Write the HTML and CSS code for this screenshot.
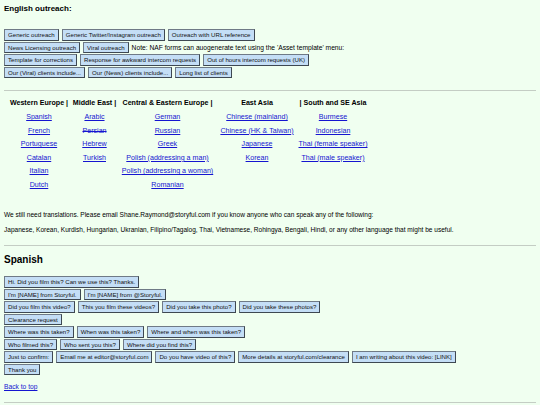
FILE: index.html
```html
<!DOCTYPE html>
<html>
<head>
<meta charset="utf-8">
<link rel="stylesheet" href="styles.css">
</head>
<body>
<h4 class="title">English outreach:</h4>
<div class="btn-group english">
  <div class="row">
    <button class="btn">Generic outreach</button>
    <button class="btn">Generic Twitter/Instagram outreach</button>
    <button class="btn">Outreach with URL reference</button>
  </div>
  <div class="row">
    <button class="btn">News Licensing outreach</button>
    <button class="btn">Viral outreach</button>
    <span class="note">Note: NAF forms can auogenerate text using the 'Asset template' menu:</span>
  </div>
  <div class="row">
    <button class="btn">Template for corrections</button>
    <button class="btn">Response for awkward intercom requests</button>
    <button class="btn">Out of hours intercom requests (UK)</button>
  </div>
  <div class="row">
    <button class="btn">Our (Viral) clients include...</button>
    <button class="btn">Our (News) clients include...</button>
    <button class="btn">Long list of clients</button>
  </div>
</div>
<div class="rule rule-1"></div>
<table class="langs">
  <tr>
    <th class="c1">Western Europe |</th>
    <th class="c2">Middle East |</th>
    <th class="c3">Central &amp; Eastern Europe |</th>
    <th class="c4">East Asia</th>
    <th class="c5">| South and SE Asia</th>
  </tr>
  <tr>
    <td><a href="#">Spanish</a></td>
    <td><a href="#">Arabic</a></td>
    <td><a href="#">German</a></td>
    <td><a href="#">Chinese (mainland)</a></td>
    <td><a href="#">Burmese</a></td>
  </tr>
  <tr>
    <td><a href="#">French</a></td>
    <td><a href="#" class="strike">Persian</a></td>
    <td><a href="#">Russian</a></td>
    <td><a href="#">Chinese (HK &amp; Taiwan)</a></td>
    <td><a href="#">Indonesian</a></td>
  </tr>
  <tr>
    <td><a href="#">Portuguese</a></td>
    <td><a href="#">Hebrew</a></td>
    <td><a href="#">Greek</a></td>
    <td><a href="#">Japanese</a></td>
    <td><a href="#">Thai (female speaker)</a></td>
  </tr>
  <tr>
    <td><a href="#">Catalan</a></td>
    <td><a href="#">Turkish</a></td>
    <td><a href="#">Polish (addressing a man)</a></td>
    <td><a href="#">Korean</a></td>
    <td><a href="#">Thai (male speaker)</a></td>
  </tr>
  <tr>
    <td><a href="#">Italian</a></td>
    <td></td>
    <td><a href="#">Polish (addressing a woman)</a></td>
    <td></td>
    <td></td>
  </tr>
  <tr>
    <td><a href="#">Dutch</a></td>
    <td></td>
    <td><a href="#">Romanian</a></td>
    <td></td>
    <td></td>
  </tr>
</table>
<p class="text t1">We still need translations. Please email Shane.Raymond@storyful.com if you know anyone who can speak any of the following:</p>
<p class="text t2">Japanese, Korean, Kurdish, Hungarian, Ukranian, Filipino/Tagalog, Thai, Vietnamese, Rohingya, Bengali, Hindi, or any other language that might be useful.</p>
<div class="rule rule-2"></div>
<h3 class="section">Spanish</h3>
<div class="btn-group spanish">
  <div class="row">
    <button class="btn">Hi. Did you film this? Can we use this? Thanks.</button>
  </div>
  <div class="row">
    <button class="btn">I'm [NAME] from Storyful.</button>
    <button class="btn">I'm [NAME] from @Storyful.</button>
  </div>
  <div class="row">
    <button class="btn">Did you film this video?</button>
    <button class="btn">This you film these videos?</button>
    <button class="btn">Did you take this photo?</button>
    <button class="btn">Did you take these photos?</button>
  </div>
  <div class="row">
    <button class="btn">Clearance request</button>
  </div>
  <div class="row">
    <button class="btn">Where was this taken?</button>
    <button class="btn">When was this taken?</button>
    <button class="btn">Where and when was this taken?</button>
  </div>
  <div class="row">
    <button class="btn">Who filmed this?</button>
    <button class="btn">Who sent you this?</button>
    <button class="btn">Where did you find this?</button>
  </div>
  <div class="row">
    <button class="btn">Just to confirm:</button>
    <button class="btn">Email me at editor@storyful.com</button>
    <button class="btn">Do you have video of this?</button>
    <button class="btn">More details at storyful.com/clearance</button>
    <button class="btn">I am writing about this video: [LINK]</button>
  </div>
  <div class="row">
    <button class="btn">Thank you</button>
  </div>
</div>
<p class="back"><a href="#">Back to top</a></p>
<div class="rule rule-3"></div>
</body>
</html>
```
FILE: styles.css
```css
html, body {
  background: #f0fff0;
}
body {
  margin: 0;
  padding: 4px 4px 0;
  font-family: "Liberation Sans", Arial, sans-serif;
  font-size: 6.7px;
  color: #000;
}
.title {
  margin: 0;
  font-size: 8px;
  line-height: 9px;
  font-weight: bold;
}
.btn-group {
  display: flex;
  flex-direction: column;
  gap: 1px;
}
.btn-group.english {
  margin-top: 16px;
}
.btn-group.spanish {
  margin-top: 10px;
}
.row {
  display: flex;
  align-items: center;
  gap: 3px;
}
.btn {
  -webkit-appearance: none;
  appearance: none;
  margin: 0;
  font-family: "Liberation Sans", Arial, sans-serif;
  font-size: 6.1px;
  line-height: 7.5px;
  padding: 1px 3px;
  border: 1px solid;
  border-color: #6f7a86 #3e4852 #3e4852 #6f7a86;
  background: #c4def6;
  color: #111;
  white-space: nowrap;
}
.note {
  font-size: 6.7px;
  line-height: 9px;
  white-space: nowrap;
}
.rule {
  height: 1px;
  background: #c4cdc4;
}
.rule-1 {
  margin-top: 12px;
}
.rule-2 {
  margin-top: 11px;
}
.rule-3 {
  margin-top: 10.5px;
}
.langs {
  margin: 5.7px 0 0 4px;
  border-collapse: collapse;
  table-layout: fixed;
  font-size: 7.1px;
}
.langs th, .langs td {
  padding: 0;
  height: 13.6px;
  text-align: center;
  white-space: nowrap;
  vertical-align: middle;
}
.langs th {
  font-weight: bold;
}
.c1 { width: 62px; }
.c2 { width: 49px; }
.c3 { width: 97px; }
.c4 { width: 82px; }
.c5 { width: 70px; }
a {
  color: #1515d0;
  text-decoration: underline;
}
.strike {
  text-decoration: line-through;
  color: #1515d0;
}
.text {
  margin: 0;
  font-size: 6.55px;
  line-height: 9px;
  white-space: nowrap;
}
.t1 {
  margin-top: 18px;
}
.t2 {
  margin-top: 6px;
}
.section {
  margin: 8.5px 0 0;
  font-size: 10px;
  line-height: 12px;
  font-weight: bold;
}
.back {
  margin: 7px 0 0;
  font-size: 6.7px;
  line-height: 9px;
}
```
